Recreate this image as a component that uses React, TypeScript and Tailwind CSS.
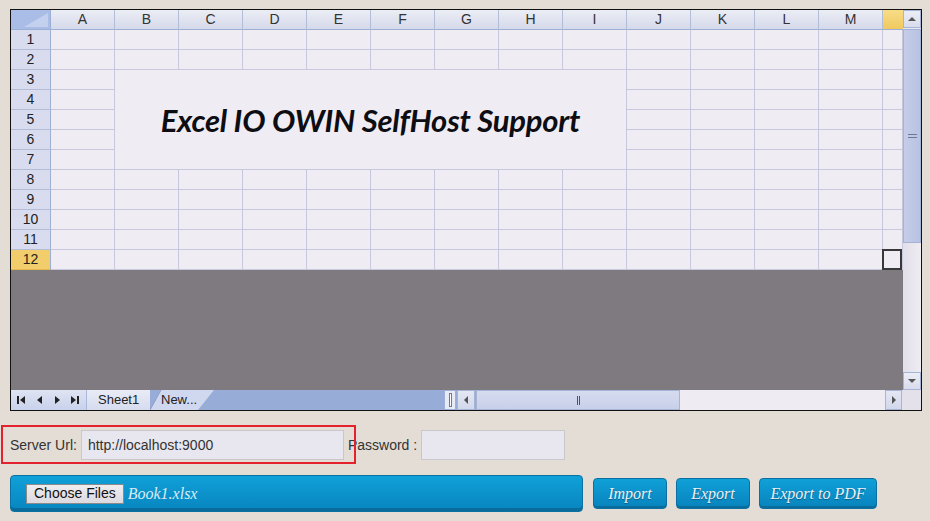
import React from 'react';

const cols = ['A', 'B', 'C', 'D', 'E', 'F', 'G', 'H', 'I', 'J', 'K', 'L', 'M'];
const rows = [1, 2, 3, 4, 5, 6, 7, 8, 9, 10, 11, 12];

function Corner() {
  return (
    <div className="relative bg-[#a9bde7] border-r border-b border-[#9cb0d6]">
      <svg className="absolute right-[2px] bottom-[2px]" width="24" height="14" viewBox="0 0 24 14">
        <polygon points="24,0 24,14 0,14" fill="#c3d1ef" />
      </svg>
    </div>
  );
}

function SheetGrid() {
  const cells: React.ReactNode[] = [];
  cells.push(<Corner key="corner" />);
  cols.forEach((c) => {
    cells.push(
      <div
        key={'h' + c}
        className="flex items-center justify-center bg-gradient-to-b from-[#eceef5] to-[#d5d9ea] border-r border-b border-r-[#b2bdd6] border-b-[#9cb0d6] text-[14px] text-[#333]"
      >
        {c}
      </div>
    );
  });
  cells.push(<div key="hN" className="bg-gradient-to-b from-[#f8dc86] to-[#f0c95f] border-b border-[#9cb0d6]" />);

  rows.forEach((r) => {
    const selectedRow = r === 12;
    cells.push(
      <div
        key={'r' + r}
        className={
          'flex items-center justify-center border-r border-b border-r-[#9cb0d6] text-[14px] text-[#222] ' +
          (selectedRow ? 'bg-[#f1cd6b] border-b-[#e0b84e]' : 'bg-[#d9dcee] border-b-[#b3bdd7]')
        }
      >
        {r}
      </div>
    );
    for (let ci = 0; ci < 14; ci++) {
      if (r >= 3 && r <= 7 && ci >= 1 && ci <= 8) continue;
      const last = ci === 13;
      cells.push(
        <div key={r + '-' + ci} className="relative bg-[#efecf3] border-r border-b border-[#c7c8de]">
          {last && selectedRow && <div className="absolute -left-px -top-px right-0 -bottom-px border-2 border-[#383838]" />}
        </div>
      );
    }
  });

  // merged B3:I7 title cell
  cells.push(
    <div
      key="merged"
      className="col-start-3 col-span-8 row-start-4 row-span-5 flex items-center justify-center bg-[#efecf3] border-r border-b border-[#c7c8de]"
    >
      <span className="font-['Lato',sans-serif] font-bold italic text-[31px] text-[#0d0d12] tracking-[-0.2px] pt-[2px]">
        Excel IO OWIN SelfHost Support
      </span>
    </div>
  );

  return (
    <div className="grid grid-cols-[40px_repeat(13,64px)_20px] grid-rows-[repeat(13,20px)] font-['Liberation_Sans',Arial,sans-serif]">
      {cells}
    </div>
  );
}

function Arrow({ dir }: { dir: 'up' | 'down' | 'left' | 'right' }) {
  const pts = {
    up: '0,5 4,1 8,5',
    down: '0,1 8,1 4,5',
    left: '5,0 5,8 1,4',
    right: '1,0 1,8 5,4',
  }[dir];
  const w = dir === 'up' || dir === 'down' ? 8 : 6;
  const h = dir === 'up' || dir === 'down' ? 6 : 8;
  return (
    <svg width={w} height={h} viewBox={`0 0 ${w} ${h}`}>
      <polygon points={pts} fill="#555" />
    </svg>
  );
}

function VScroll() {
  return (
    <div className="w-[18px] flex flex-col bg-[#ebe8f0]">
      <div className="h-[18px] flex items-center justify-center bg-gradient-to-b from-[#eceef6] to-[#d8dcec] border border-[#a6b5d5]">
        <Arrow dir="up" />
      </div>
      <div className="h-[214px] mt-px flex items-center justify-center bg-gradient-to-r from-[#c5cde8] to-[#b8c3e2] border border-[#a3b2d8]">
        <div className="flex flex-col gap-[2px]">
          <div className="w-[9px] h-px bg-[#6f7894]" />
          <div className="w-[9px] h-px bg-[#6f7894]" />
        </div>
      </div>
      <div className="flex-1 bg-gradient-to-r from-[#e2dfe9] to-[#efecf3]" />
      <div className="h-[18px] flex items-center justify-center bg-gradient-to-b from-[#eceef6] to-[#d8dcec] border border-[#a6b5d5]">
        <Arrow dir="down" />
      </div>
    </div>
  );
}

function NavIcon({ kind }: { kind: 'first' | 'prev' | 'next' | 'last' }) {
  return (
    <svg width="9" height="10" viewBox="0 0 9 10">
      {kind === 'first' && (
        <>
          <rect x="0" y="1" width="2" height="8" fill="#222" />
          <polygon points="8,1 8,9 3,5" fill="#222" />
        </>
      )}
      {kind === 'prev' && <polygon points="7,1 7,9 2,5" fill="#222" />}
      {kind === 'next' && <polygon points="2,1 2,9 7,5" fill="#222" />}
      {kind === 'last' && (
        <>
          <polygon points="0,1 0,9 5,5" fill="#222" />
          <rect x="6" y="1" width="2" height="8" fill="#222" />
        </>
      )}
    </svg>
  );
}

function TabBar() {
  return (
    <div className="h-[20px] flex bg-[#98acd8] font-['Liberation_Sans',Arial,sans-serif] text-[13px] text-[#222]">
      <div className="w-[75px] flex items-center justify-around px-[2px] bg-gradient-to-b from-[#dfe4f3] to-[#c9d2ec]">
        <NavIcon kind="first" />
        <NavIcon kind="prev" />
        <NavIcon kind="next" />
        <NavIcon kind="last" />
      </div>
      <div className="w-[64px] flex items-center pl-[11px] bg-gradient-to-b from-[#e9ecf6] to-[#d6dcef] border-l border-[#aab8da]">
        Sheet1
      </div>
      <div className="relative w-[64px] flex items-center pl-[11px]">
        <svg className="absolute left-0 top-0" width="64" height="20" viewBox="0 0 64 20">
          <polygon points="0,20 11,0 64,0 48,20" fill="#d0d8ef" />
          <polyline points="0,20 11,0" fill="none" stroke="#8d9ec8" strokeWidth="1" />
        </svg>
        <span className="relative">New...</span>
      </div>
      <div className="flex-1" />
      <div className="w-[12px] flex items-center justify-center bg-[#e8ebf5] border border-[#9eb0d6]">
        <div className="w-[3px] h-[14px] border border-[#6a789c] bg-white" />
      </div>
      <div className="w-[18px] ml-[1px] flex items-center justify-center bg-gradient-to-b from-[#e4e7f3] to-[#d2d8ec] border border-[#a6b5d5]">
        <Arrow dir="left" />
      </div>
      <div className="w-[204px] ml-[1px] flex items-center justify-center bg-gradient-to-b from-[#d6dcef] to-[#c8d0ea] border border-[#a6b5d5]">
        <div className="flex gap-[1px]">
          <div className="w-px h-[9px] bg-[#555]" />
          <div className="w-px h-[9px] bg-[#555]" />
        </div>
      </div>
      <div className="w-[205px] bg-[#eeebf2]" />
      <div className="w-[17px] flex items-center justify-center bg-gradient-to-b from-[#e4e7f3] to-[#d2d8ec] border border-[#a6b5d5]">
        <Arrow dir="right" />
      </div>
      <div className="w-[19px] bg-[#e4e1ea]" />
    </div>
  );
}

function BlueButton({ children, w }: { children: React.ReactNode; w: string }) {
  return (
    <button
      className={
        'h-[31px] rounded-[4px] border border-[#0b6f9f] bg-gradient-to-b from-[#10a0d8] to-[#0883bd] shadow-[inset_0_-2px_0_#0a6c9c] font-[\'Liberation_Serif\',Georgia,serif] italic text-[16px] text-[#eef0f6] [text-shadow:0_1px_1px_rgba(0,0,0,0.35)] ' +
        w
      }
    >
      {children}
    </button>
  );
}

export default function App() {
  return (
    <div className="w-[930px] h-[521px] bg-[#e3ddd6] pt-[9px] pl-[10px] font-['Liberation_Sans',Arial,sans-serif] overflow-hidden">
      <div className="w-[912px] border border-[#111] bg-white">
        <div className="flex">
          <div className="w-[892px] flex flex-col">
            <SheetGrid />
            <div className="h-[120px] bg-[#7f7a80]" />
          </div>
          <VScroll />
        </div>
        <TabBar />
      </div>

      <div className="relative mt-[19px] flex items-center h-[30px] text-[14px] text-[#333]">
        <span>Server Url:</span>
        <div className="ml-[4px] w-[263px] h-[30px] flex items-center pl-[6px] bg-[#e8e6ee] border border-[#c9c6cc] text-[#333]">
          http://localhost:9000
        </div>
        <span className="ml-[4px]">Password :</span>
        <div className="ml-[4px] w-[144px] h-[30px] bg-[#e8e6ee] border border-[#c9c6cc]" />
        {/* red highlight drawn over the url field */}
        <div className="absolute -left-[9px] -top-[5px] w-[355px] h-[39px] border-2 border-[#e3222d]" />
      </div>

      <div className="mt-[15px] flex items-center">
        <div className="w-[573px] h-[37px] flex items-center pl-[15px] rounded-[4px] border border-[#0b72a3] bg-gradient-to-b from-[#10a0d8] to-[#0885bf] shadow-[inset_0_-3px_0_#0a6c9c]">
          <div className="h-[20px] px-[7px] flex items-center bg-gradient-to-b from-[#efedf0] to-[#dcdade] border border-[#8a8a8a] text-[14px] text-[#111]">
            Choose Files
          </div>
          <span className="ml-[4px] font-['Liberation_Serif',Georgia,serif] italic text-[16px] text-[#d8ecf6]">Book1.xlsx</span>
        </div>
        <div className="ml-[10px] flex gap-[9px]">
          <BlueButton w="w-[74px]">Import</BlueButton>
          <BlueButton w="w-[74px]">Export</BlueButton>
          <BlueButton w="w-[118px]">Export to PDF</BlueButton>
        </div>
      </div>
    </div>
  );
}
